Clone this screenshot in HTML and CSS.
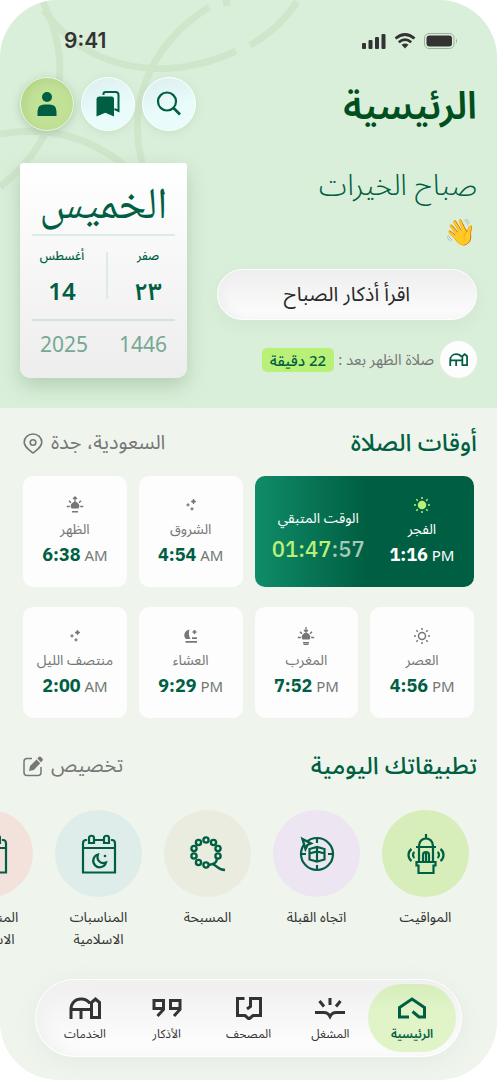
FILE: index.html
```html
<!DOCTYPE html>
<html lang="ar" dir="rtl">
<head>
<meta charset="utf-8">
<meta name="viewport" content="width=device-width, initial-scale=1">
<title>الرئيسية</title>
<link rel="stylesheet" href="styles.css">
</head>
<body>
<svg class="defs" width="0" height="0" aria-hidden="true">
  <defs>
    <symbol id="mosque" viewBox="0 0 32 22"><path d="M2 22V12.500C2 6 6.500 2 12 2c4 0 7 1.500 9 4.500M2 12.500h20M12 12.500V22M22.500 20.500v-15L26.500 2l4 3.500v15z" fill="none" stroke="currentColor" stroke-width="3"/></symbol>
    <symbol id="stars" viewBox="0 0 18 18"><path d="M11.500 3l.700 1.800 1.800.700-1.800.700-.700 1.800-.700-1.800-1.800-.700 1.800-.700zM6 7.500l.400 1 1 .400-1 .400-.400 1-.400-1-1-.400 1-.400zM10 11.500l.400 1 1 .400-1 .400-.400 1-.400-1-1-.400 1-.400z" fill="currentColor" stroke="currentColor" stroke-width=".9"/></symbol>
    <symbol id="sun" viewBox="0 0 18 18"><path d="M9 1v2M9 15v2M1 9h2M15 9h2M3.300 3.300l1.500 1.500M13.200 13.200l1.500 1.500M3.300 14.700l1.500-1.500M13.200 4.800l1.500-1.500" stroke="currentColor" stroke-width="1.500"/><circle cx="9" cy="9" r="3.500" stroke="currentColor" stroke-width="1.500"/></symbol>
    <symbol id="horizon" viewBox="0 0 18 18"><path d="M5.500 12.500a4.200 4.200 0 1 1 7 0z" fill="currentColor"/><path d="M.8 10.500h3M14.200 10.500h3M3 4.800l2 2M15 4.800l-2 2M6 15.800h6" fill="none" stroke="currentColor" stroke-width="1.500"/></symbol>
    <symbol id="calendar" viewBox="0 0 36 40"><path d="M1 14h34M14 6h8M6 6H5C3 6 2 7.500 2 9.500v29h32v-29C34 7.500 33 6 31 6h-1M8 9V4c0-3 5-3 5 0v5zM23 9V4c0-3 5-3 5 0v5z" fill="none" stroke="currentColor" stroke-width="2.200"/></symbol>
  </defs>
</svg>
<main class="phone">
  <header class="hero">
    <svg class="arcs" viewBox="0 0 320 200" width="320" height="200" aria-hidden="true">
      <path d="M43 2C70 56 70 132 0 187M44 10C84 69 164 85 236 51M209 7C145 48 126 110 144 170M0 134C48 126 88 136 125 166M250 45Q277 31 297 2M223 3l7-1"/>
    </svg>
    <div class="status" dir="ltr">
      <span class="clock">9:41</span>
      <svg class="system" width="98" height="18" viewBox="0 0 98 18" aria-hidden="true">
        <g fill="#333"><rect x="1" y="11" width="4" height="6" rx="1"/><rect x="7.500" y="8" width="4" height="9" rx="1"/><rect x="14" y="5" width="4" height="12" rx="1"/><rect x="20.500" y="2" width="4" height="15" rx="1"/></g>
        <g fill="none" stroke="#333" stroke-width="2.800"><path d="M34.500 6.500Q44 -1.500 53.500 6.500M37.800 10.200Q44 5 50.200 10.200"/></g><path d="M40.500 12.800Q44 10.300 47.500 12.800L44 16.500z" fill="#333"/>
        <rect x="63.500" y="1.500" width="29.500" height="15" rx="4.500" fill="none" stroke="#9fae9f"/><rect x="65.500" y="3.500" width="25.500" height="11" rx="3" fill="#333"/><path d="M95 6.500q2 2.500 0 5z" fill="#9fae9f"/>
      </svg>
    </div>
    <div class="topbar">
      <h1>الرئيسية</h1>
      <div class="actions">
        <button class="round" type="button" aria-label="بحث"><svg width="26" height="26" viewBox="0 0 26 26"><circle cx="11" cy="10.500" r="9" fill="none" stroke="currentColor" stroke-width="2.200"/><path d="M17.500 17l6.500 6.500" stroke="currentColor" stroke-width="2.600"/></svg></button>
        <button class="round" type="button" aria-label="المحفوظات"><svg width="26" height="26" viewBox="0 0 26 26"><path d="M8.500 4V3q0-2 2-2h10q3 0 3 3v16l-4-2" fill="none" stroke="currentColor" stroke-width="2"/><path d="M1.500 25.500V8.500q0-3 3-3h12q2.500 0 2.500 2.500v17.500l-8.700-3.800z" fill="currentColor"/></svg></button>
        <button class="round me" type="button" aria-label="الحساب"><svg width="26" height="26" viewBox="0 0 26 26"><circle cx="13" cy="6" r="5" fill="currentColor"/><path d="M3.500 25v-4.500q0-7 7-7h5q7 0 7 7V25z" fill="currentColor"/></svg></button>
      </div>
    </div>
    <div class="intro">
      <div class="welcome">
        <p class="greet">صباح الخيرات</p>
        <span class="wave" role="img" aria-label="تحية">👋</span>
        <button class="read" type="button">اقرأ أذكار الصباح</button>
        <p class="next"><span class="next-icon"><svg width="19" height="13"><use href="#mosque"/></svg></span><span>صلاة الظهر بعد :</span><strong>22 دقيقة</strong></p>
      </div>
      <div class="date">
        <p class="weekday">الخميس</p>
        <div class="days">
          <div class="hijri"><span class="month">صفر</span><b>٢٣</b></div>
          <i class="rule"></i>
          <div class="greg"><span class="month">أغسطس</span><b>14</b></div>
        </div>
        <div class="years"><span>1446</span><span>2025</span></div>
      </div>
    </div>
  </header>

  <section class="prayers">
    <div class="heading">
      <h2>أوقات الصلاة</h2>
      <a class="side" href="#location"><span>السعودية، جدة</span><svg width="20" height="21" viewBox="0 0 20 21"><path d="M10 20C5 16 1.200 13.500 1.200 9.200a8.800 8.200 0 0 1 17.600 0C18.800 13.500 15 16 10 20z" fill="none" stroke="currentColor" stroke-width="1.600"/><circle cx="10" cy="9.500" r="2.800" fill="none" stroke="currentColor" stroke-width="1.600"/></svg></a>
    </div>
    <div class="times">
      <article class="card current">
        <div class="slot"><svg class="ray" width="18" height="18"><use href="#sun"/></svg><h3>الفجر</h3><p class="time" dir="ltr"><b>1:16</b> PM</p></div>
        <div class="left"><h3>الوقت المتبقي</h3><p class="count" dir="ltr">01:47<span>:57</span></p></div>
      </article>
      <article class="card"><svg width="18" height="18"><use href="#stars"/></svg><h3>الشروق</h3><p class="time" dir="ltr"><b>4:54</b> AM</p></article>
      <article class="card"><svg width="18" height="18" viewBox="0 0 18 18"><use href="#horizon" width="18" height="18"/><path d="M9 6V1M7 3l2-2 2 2" fill="none" stroke="currentColor" stroke-width="1.300"/></svg><h3>الظهر</h3><p class="time" dir="ltr"><b>6:38</b> AM</p></article>
      <article class="card"><svg class="hollow" width="18" height="18"><use href="#sun"/></svg><h3>العصر</h3><p class="time" dir="ltr"><b>4:56</b> PM</p></article>
      <article class="card"><svg width="18" height="18" viewBox="0 0 18 18"><use href="#horizon" width="18" height="18"/><path d="M9 0v5M7 3l2 2 2-2M6.500 17.500h5" fill="none" stroke="currentColor" stroke-width="1.300"/></svg><h3>المغرب</h3><p class="time" dir="ltr"><b>7:52</b> PM</p></article>
      <article class="card"><svg width="18" height="18" viewBox="0 0 18 18"><path d="M7.500 2.500C1.500 4 1.200 9.500 4 12h4.500C6.500 9 6.500 5.500 7.500 2.500z" fill="currentColor"/><path d="M12.500 3v4M10.500 5h4M10 11.200h5M3.500 14.800h11.500" stroke="currentColor" stroke-width="1.700"/></svg><h3>العشاء</h3><p class="time" dir="ltr"><b>9:29</b> PM</p></article>
      <article class="card"><svg width="18" height="18"><use href="#stars"/></svg><h3>منتصف الليل</h3><p class="time" dir="ltr"><b>2:00</b> AM</p></article>
    </div>
  </section>

  <section class="apps">
    <div class="heading">
      <h2>تطبيقاتك اليومية</h2>
      <a class="side" href="#customize"><span>تخصيص</span><svg width="20" height="21" viewBox="0 0 20 21"><path d="M9 2.500H4q-3 0-3 3v11q0 3 3 3h11q3 0 3-3V11" fill="none" stroke="currentColor" stroke-width="1.500"/><path d="M6 15l1-5 6.500-6.500 3.800 3.800L10.800 14zM14.300 2.600l1.700-1.800q.800-.600 1.600 0l2 2q.600.800 0 1.600l-1.700 1.800z" fill="currentColor"/></svg></a>
    </div>
    <div class="shortcuts">
      <a class="app" href="#timings"><span class="disc lime"><svg width="40" height="42" viewBox="0 0 40 42"><g fill="none" stroke="currentColor" stroke-width="2.200"><path d="M20 1v5M13 13c0-10 14-10 14 0M10 14h20M13 14v14M27 14v14M17 28v-6c0-4 6-4 6 0v6M20 19v9M10.500 29h19v3.500H27.500V40h-15v-7.500h-2zM8.500 19c-2 1-2 5 0 6M31.500 19c2 1 2 5 0 6"/><path d="M5.500 16c-4 3-4 9 0 12M34.500 16c4 3 4 9 0 12"/></g></svg></span><span>المواقيت</span></a>
      <a class="app" href="#qibla"><span class="disc lilac"><svg width="36" height="38" viewBox="0 0 36 38"><g fill="none" stroke="currentColor" stroke-width="2.200"><circle cx="18" cy="19" r="16"/><path d="M18 3v5M18 30v5M2 19h5M29 19h5M10.500 14l7.500-2 7.500 2v10.500l-7.500 2-7.500-2zM18 12v15M10.500 18.500l7.500-2 7.500 2"/></g><path d="M3.500 4l8.500 4.500-3.500 1.500-2 4z" fill="#dfe8dd" stroke="currentColor" stroke-width="2.400"/></svg></span><span>اتجاه القبلة</span></a>
      <a class="app" href="#beads"><span class="disc sand"><svg width="36" height="38" viewBox="0 0 36 38"><g fill="none" stroke="currentColor" stroke-width="2.400"><circle cx="16" cy="5" r="2.600"/><circle cx="23.500" cy="7.500" r="2.600"/><circle cx="28" cy="13.500" r="2.600"/><circle cx="28" cy="21" r="2.600"/><circle cx="16" cy="30" r="2.600"/><circle cx="8.500" cy="27.500" r="2.600"/><circle cx="4" cy="21" r="2.600"/><circle cx="4" cy="13.500" r="2.600"/><circle cx="8.500" cy="7.500" r="2.600"/><path d="M18.500 30c6-1 8-2 8.500-6.500M23 29.500c4 .500 4 5 12 5.500"/></g></svg></span><span>المسبحة</span></a>
      <a class="app" href="#events"><span class="disc sky"><svg width="36" height="40" viewBox="0 0 36 40"><use href="#calendar" width="36" height="40"/><path d="M17 20.500a6.500 6.500 0 1 0 8 8c-5 2-10-2-8-8z" fill="none" stroke="currentColor" stroke-width="2.200"/><circle cx="24" cy="22" r="1.300" fill="currentColor"/></svg></span><span>المناسبات الاسلامية</span></a>
      <a class="app" href="#events-more"><span class="disc rose"><svg width="36" height="40"><use href="#calendar"/></svg></span><span>المناسبات الاسلامية</span></a>
    </div>
  </section>

  <nav class="tabs">
    <a class="tab active" href="#home"><svg width="32" height="24" viewBox="0 0 32 24"><path d="M13 21H3.500V11.500L16 3l12.500 8.500V21h-5.500l-6.500-5.500" fill="none" stroke="currentColor" stroke-width="3"/></svg><span>الرئيسية</span></a>
    <a class="tab" href="#workshop"><svg width="32" height="24" viewBox="0 0 32 24"><path d="M1 16.500h9q4 0 6 4 2-4 6-4h9M16 2v7M5.500 5l4.500 5.500M26.500 5l-4.500 5.500" fill="none" stroke="currentColor" stroke-width="3"/></svg><span>المشغل</span></a>
    <a class="tab" href="#mushaf"><svg width="32" height="24" viewBox="0 0 32 24"><path d="M11.500 2.500H4.500v17h7.500l4 3.500 4-3.500h7.500v-17H17.500v8l-3.500 2.500" fill="none" stroke="currentColor" stroke-width="3"/></svg><span>المصحف</span></a>
    <a class="tab" href="#adhkar"><svg width="32" height="24" viewBox="0 0 32 24"><path d="M12.500 12.500H3V4.500h9.500v9l-6 6.500M29 12.500h-9.500V4.500H29v9l-6 6.500" fill="none" stroke="currentColor" stroke-width="3"/></svg><span>الأذكار</span></a>
    <a class="tab" href="#services"><svg width="32" height="24"><use href="#mosque"/></svg><span>الخدمات</span></a>
  </nav>
</main>
</body>
</html>
```
FILE: styles.css
```css
* { box-sizing: border-box; }
body {
  margin: 0;
  background: #fff;
  color: #333;
  font-family: "Noto Sans", "Noto Sans Arabic", "IBM Plex Sans Arabic", "DejaVu Sans", sans-serif;
}
h1, h2, h3, p { margin: 0; font-weight: inherit; }
a { color: inherit; text-decoration: none; }
button { border: 0; padding: 0; font: inherit; color: inherit; }
svg { display: block; flex: none; }
.defs { position: absolute; }

.phone {
  overflow: hidden;
  border-radius: 58px;
  background: #eff5ed;
  display: flex;
  flex-direction: column;
}

.hero { position: relative; background: #daefda; padding: 24px 20px 30px; color: #005f43; }
.arcs { position: absolute; top: 0; left: 0; fill: none; stroke: #cfe6cb; stroke-width: 7; }
.status { position: relative; height: 34px; padding: 0 18px 0 44px; display: flex; align-items: center; justify-content: space-between; }
.clock { font: 600 21px/34px Inter, sans-serif; color: #333; }

.topbar { position: relative; margin-top: 19px; height: 54px; display: flex; align-items: center; justify-content: space-between; }
h1 { font-size: 38px; line-height: 54px; font-weight: 600; color: #004f1f; }
.actions { display: flex; gap: 7px; }
.round {
  width: 54px; height: 54px; border-radius: 50%;
  display: grid; place-items: center; color: #005f43;
  border: 1px solid #fff;
  background: linear-gradient(160deg, #dceff0, #e9fbfa 60%);
  box-shadow: 0 2px 8px #a9cdaa66;
}
.round.me { background: #c1e196; border-color: #e8f5dc; box-shadow: 0 2px 8px #8fb28f99, inset 3px 3px 8px #b2d588; }

.intro { position: relative; margin-top: 32px; display: flex; gap: 30px; }
.welcome { flex: 1; min-width: 0; display: flex; flex-direction: column; align-items: flex-start; }
.greet { font-size: 29px; line-height: 42px; font-weight: 300; white-space: nowrap; }
.wave { height: 36px; font: 26px/36px "Noto Color Emoji", sans-serif; margin-top: 9px; }
.read {
  width: 100%; height: 51px; margin-top: 19px; border-radius: 26px;
  border: 1px solid #fff; color: #282828; font-size: 20px;
  background: linear-gradient(#eeeeee, #fdfdfd);
  box-shadow: 0 6px 16px #b5d3b544, inset 5px 0 10px #efefef;
}
.next { margin-top: 21px; display: flex; align-items: center; gap: 4px; font-size: 15px; color: #777; white-space: nowrap; }
.next-icon { width: 37px; height: 37px; border-radius: 50%; background: #fdfdfd; color: #005f43; display: grid; place-items: center; margin-left: 2px; }
.next strong { background: #b8f078; color: #005f43; border-radius: 5px; padding: 0 8px; font-size: 15px; line-height: 24px; font-weight: 500; }

.date {
  width: 167px; padding: 0 12px; border-radius: 3px 3px 10px 10px;
  background: linear-gradient(#fff, #f8f8f8 40%, #ededed);
  box-shadow: 0 8px 20px #88aa8877;
}
.weekday { height: 73px; border-bottom: 2px solid #dcebe5; text-align: center; font: 44px/92px "Noto Naskh Arabic", "Amiri", "Scheherazade New", "Liberation Serif", serif; }
.days { display: flex; justify-content: space-between; height: 85px; border-bottom: 2px solid #d2e2dc; text-align: center; padding: 8px 0; }
.hijri, .greg { display: flex; flex-direction: column; }
.hijri { width: 54px; }
.greg { width: 60px; }
.rule { width: 2px; height: 47px; margin-top: 8px; background: #dcebe5; }
.month { font-size: 12px; line-height: 24px; font-weight: 500; }
.days b { font-size: 24px; line-height: 46px; font-weight: 600; }
.years { display: flex; justify-content: space-between; padding: 0 8px; font-size: 21px; line-height: 46px; color: #76a892; }

.prayers { padding: 11px 23px 0; }
.heading { height: 48px; display: flex; align-items: center; justify-content: space-between; color: #005f43; }
.heading h2 { font-size: 24px; font-weight: 500; margin-right: -3px; white-space: nowrap; }
.side { display: flex; align-items: center; gap: 8px; color: #777; font-size: 20px; white-space: nowrap; }
.times { margin-top: 9px; display: grid; grid-template-columns: repeat(4, 1fr); gap: 20px 12px; }
.card { height: 111px; border-radius: 10px; background: #fcfdfc; color: #757775; padding-top: 20px; display: flex; flex-direction: column; align-items: center; white-space: nowrap; }
h3 { font-size: 14px; line-height: 30px; }
.time { font-size: 15px; line-height: 22px; }
.time b, .count { font-family: "IBM Plex Sans", "IBM Plex Sans Arabic", "Noto Sans", sans-serif; }
.time b { font-size: 18px; font-weight: 700; color: #005f43; }
.current { grid-column: span 2; padding: 0; flex-direction: row; color: #fff; background: linear-gradient(90deg, #0f8c68, #005f43 50%); }
.slot { width: 104px; height: 100%; padding-top: 20px; display: flex; flex-direction: column; align-items: center; }
.current .time b { color: #fff; }
.ray { color: #b8f078; fill: #b8f078; }
.hollow { fill: none; }
.left { flex: 1; text-align: center; padding: 4px 0 0 12px; }
.count { font-size: 22px; line-height: 32px; font-weight: 500; color: #b8f078; }
.count span { color: #a4c9b8; }

.apps { padding: 24px 23px 0; }
.shortcuts { margin: 20px 5px 0; display: flex; gap: 22px; }
.app { flex: 0 0 87px; display: flex; flex-direction: column; align-items: center; gap: 9px; font-size: 14px; line-height: 22px; text-align: center; }
.disc { width: 87px; height: 87px; border-radius: 50%; display: grid; place-items: center; color: #005f43; }
.lime { background: #d7edba; }
.lilac { background: #eee5f3; }
.sand { background: #e9ecde; }
.sky { background: #deecea; }
.rose { background: #f3e1dc; }

.tabs {
  margin: 29px 35px 23px; height: 78px; padding: 4px 8px; border-radius: 39px;
  display: flex; justify-content: space-between; border: 1px solid #fff;
  background: linear-gradient(#efefef, #fff); box-shadow: 0 4px 20px #d8e0d877, inset 8px 0 16px #f1f1f1;
}
.tab { flex: 1 1 82px; display: flex; flex-direction: column; align-items: center; padding-top: 12px; gap: 3px; font-size: 12px; line-height: 22px; white-space: nowrap; }
.active { flex-basis: 88px; margin: 0 -3px; border-radius: 35px; background: linear-gradient(#d7edba, #e0f4c8 40%); color: #005f43; font-weight: 600; }
```
